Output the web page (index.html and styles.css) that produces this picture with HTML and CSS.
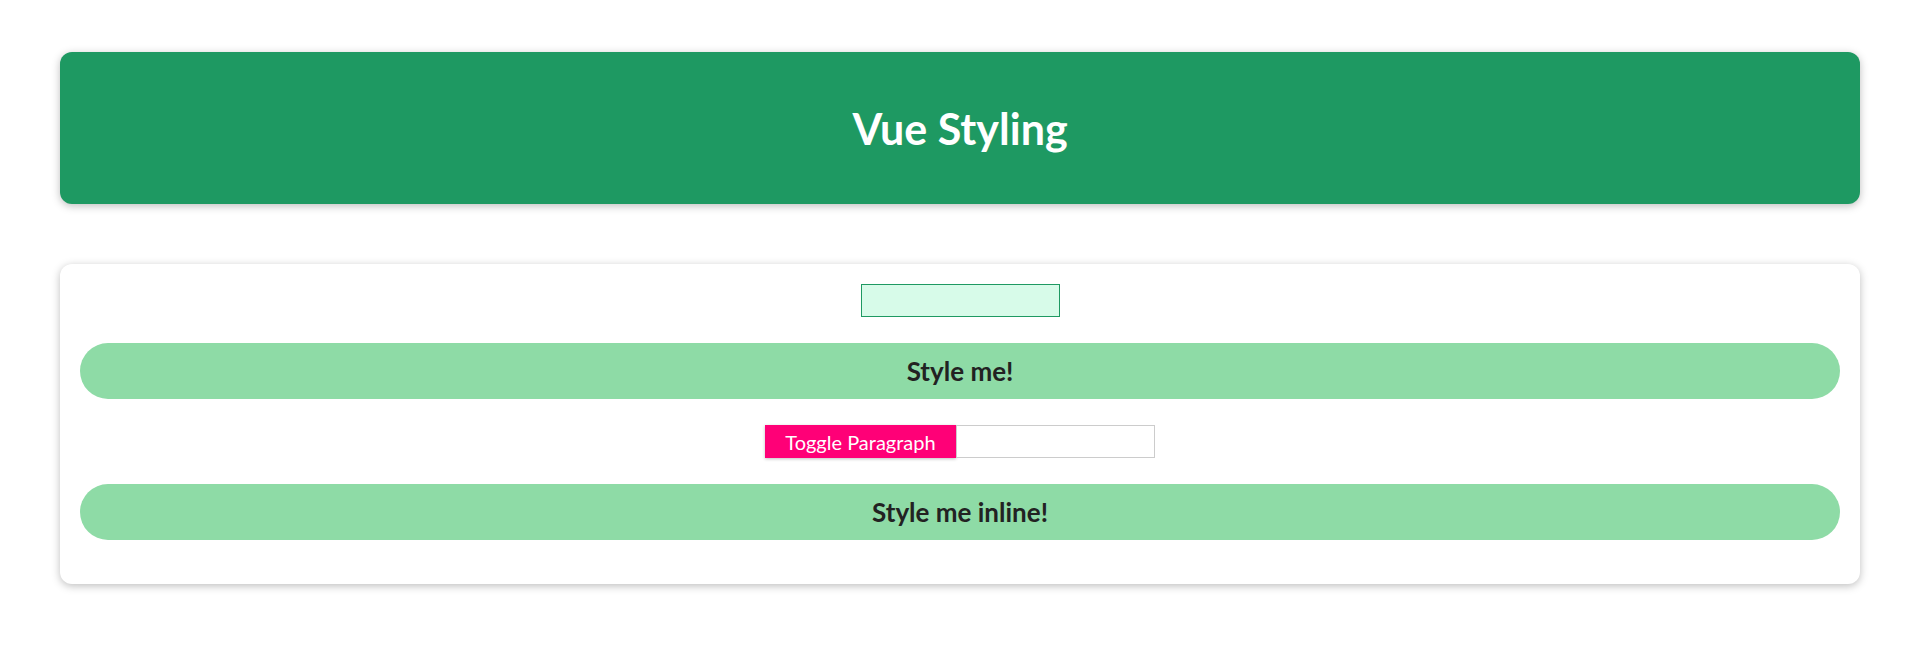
FILE: index.html
```html
<!DOCTYPE html>
<html lang="en">
<head>
<meta charset="utf-8">
<title>Vue Styling</title>
<link rel="stylesheet" href="styles.css">
</head>
<body>
<main class="page">
  <header class="hero">
    <h1 class="hero-title">Vue Styling</h1>
  </header>
  <section class="card">
    <input class="text-input" type="text" aria-label="class name">
    <div class="pill">Style me!</div>
    <div class="toggle-row">
      <button class="toggle-btn" type="button">Toggle Paragraph</button>
      <input class="plain-input" type="text" aria-label="value">
    </div>
    <div class="pill pill-last">Style me inline!</div>
  </section>
</main>
</body>
</html>
```

FILE: styles.css
```css
* { box-sizing: border-box; }
html, body { margin: 0; padding: 0; background: #fff; }
body { font-family: Lato, "Open Sans", sans-serif; color: #222; }
.page {
  display: flex;
  flex-direction: column;
  gap: 60px;
  padding: 52px 60px 40px;
}
.hero {
  height: 152px;
  background: #1e9962;
  border-radius: 12px;
  box-shadow: 0 2px 8px rgba(0,0,0,0.26);
  display: flex;
  align-items: center;
  justify-content: center;
}
.hero-title {
  margin: 0;
  color: #fff;
  font-size: 43px;
  font-weight: 700;
}
.card {
  background: #fff;
  border-radius: 12px;
  box-shadow: 0 2px 8px rgba(0,0,0,0.26);
  padding: 20px 20px 44px;
  display: flex;
  flex-direction: column;
  align-items: center;
  gap: 26px;
}
.text-input {
  width: 199px;
  height: 33px;
  border: 1px solid #1e9962;
  background: #d7fbe9;
  outline: none;
  font: inherit;
}
.pill {
  align-self: stretch;
  height: 56px;
  border-radius: 28px;
  background: #8edba6;
  display: flex;
  align-items: center;
  justify-content: center;
  font-size: 26px;
  font-weight: 700;
  color: #222;
}
.toggle-row {
  display: flex;
  height: 33px;
}
.toggle-btn {
  width: 191px;
  height: 33px;
  border: none;
  background: #ff0077;
  color: #fff;
  font-family: inherit;
  font-size: 20px;
  padding: 0;
  box-shadow: 0 1px 3px rgba(0,0,0,0.25);
}
.plain-input {
  width: 199px;
  height: 33px;
  border: 1px solid #ccc;
  background: #fff;
  outline: none;
}
```
